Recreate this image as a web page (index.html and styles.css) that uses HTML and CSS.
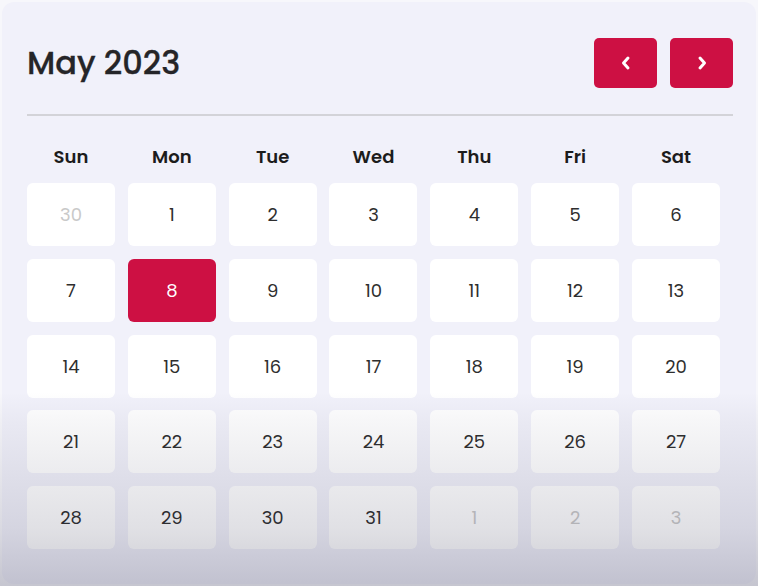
FILE: index.html
```html
<!DOCTYPE html>
<html>
<head>
<meta charset="utf-8">
<link rel="stylesheet" href="styles.css">
</head>
<body>
<div class="card">
  <div class="header">
    <h1 class="title">May 2023</h1>
    <div class="nav">
      <button class="nav-btn" aria-label="Previous month">
        <svg width="14" height="16" viewBox="0 0 14 16"><path d="M9 3 L4.5 8 L9 13" fill="none" stroke="#fff" stroke-width="3" stroke-linecap="round" stroke-linejoin="round"/></svg>
      </button>
      <button class="nav-btn" aria-label="Next month">
        <svg width="14" height="16" viewBox="0 0 14 16"><path d="M5 3 L9.5 8 L5 13" fill="none" stroke="#fff" stroke-width="3" stroke-linecap="round" stroke-linejoin="round"/></svg>
      </button>
    </div>
  </div>
  <div class="divider"></div>
  <div class="weekdays">
    <div>Sun</div><div>Mon</div><div>Tue</div><div>Wed</div><div>Thu</div><div>Fri</div><div>Sat</div>
  </div>
  <div class="days">
    <div class="day muted">30</div><div class="day">1</div><div class="day">2</div><div class="day">3</div><div class="day">4</div><div class="day">5</div><div class="day">6</div>
    <div class="day">7</div><div class="day selected">8</div><div class="day">9</div><div class="day">10</div><div class="day">11</div><div class="day">12</div><div class="day">13</div>
    <div class="day">14</div><div class="day">15</div><div class="day">16</div><div class="day">17</div><div class="day">18</div><div class="day">19</div><div class="day">20</div>
    <div class="day">21</div><div class="day">22</div><div class="day">23</div><div class="day">24</div><div class="day">25</div><div class="day">26</div><div class="day">27</div>
    <div class="day">28</div><div class="day">29</div><div class="day">30</div><div class="day">31</div><div class="day muted">1</div><div class="day muted">2</div><div class="day muted">3</div>
  </div>
</div>
<div class="shade"></div>
</body>
</html>
```
FILE: styles.css
```css
* { box-sizing: border-box; }
html, body { margin: 0; padding: 0; }
body {
  position: relative;
  width: 758px;
  height: 586px;
  overflow: hidden;
  background: #f7f7fb;
  font-family: "Poppins", "Inter", "Noto Sans", sans-serif;
  padding: 2px 2px 0 2px;
}
.card {
  width: 754px;
  height: 582px;
  border-radius: 12px;
  background: #f1f1fa;
  padding: 36px 23px 0 25px;
  overflow: hidden;
}
.header {
  display: flex;
  justify-content: space-between;
  align-items: center;
  height: 50px;
}
.title {
  margin: 0;
  font-size: 32px;
  font-weight: 500;
  color: #252528;
  -webkit-text-stroke: 0.3px #252528;
}
.nav { display: flex; gap: 13px; }
.nav-btn {
  width: 63px;
  height: 50px;
  border: none;
  border-radius: 5px;
  background: #cd1043;
  display: flex;
  align-items: center;
  justify-content: center;
  padding: 0;
}
.divider {
  margin-top: 26px;
  height: 2px;
  background: #d3d3d8;
}
.weekdays {
  display: grid;
  grid-template-columns: repeat(7, 88px);
  column-gap: 12.83px;
  margin-top: 23px;
  height: 36px;
  line-height: 36px;
  text-align: center;
  font-size: 18px;
  font-weight: 600;
  color: #1c1c1c;
}
.days {
  margin-top: 8px;
  display: grid;
  grid-template-columns: repeat(7, 88px);
  grid-auto-rows: 63px;
  column-gap: 12.83px;
  row-gap: 12.75px;
}
.day {
  background: #ffffff;
  border-radius: 6px;
  display: flex;
  align-items: center;
  justify-content: center;
  font-size: 18px;
  color: #2e2e2e;
}
.day.muted { color: #c9c9c9; }
.day.selected { background: #cd1043; color: #ffffff; }
.shade {
  position: absolute;
  left: 0;
  right: 0;
  top: 392px;
  bottom: 0;
  background: linear-gradient(to bottom, rgba(40,40,70,0) 0%, rgba(40,40,70,0.04) 15%, rgba(40,40,70,0.14) 70%, rgba(40,40,70,0.24) 100%);
  pointer-events: none;
}
```
